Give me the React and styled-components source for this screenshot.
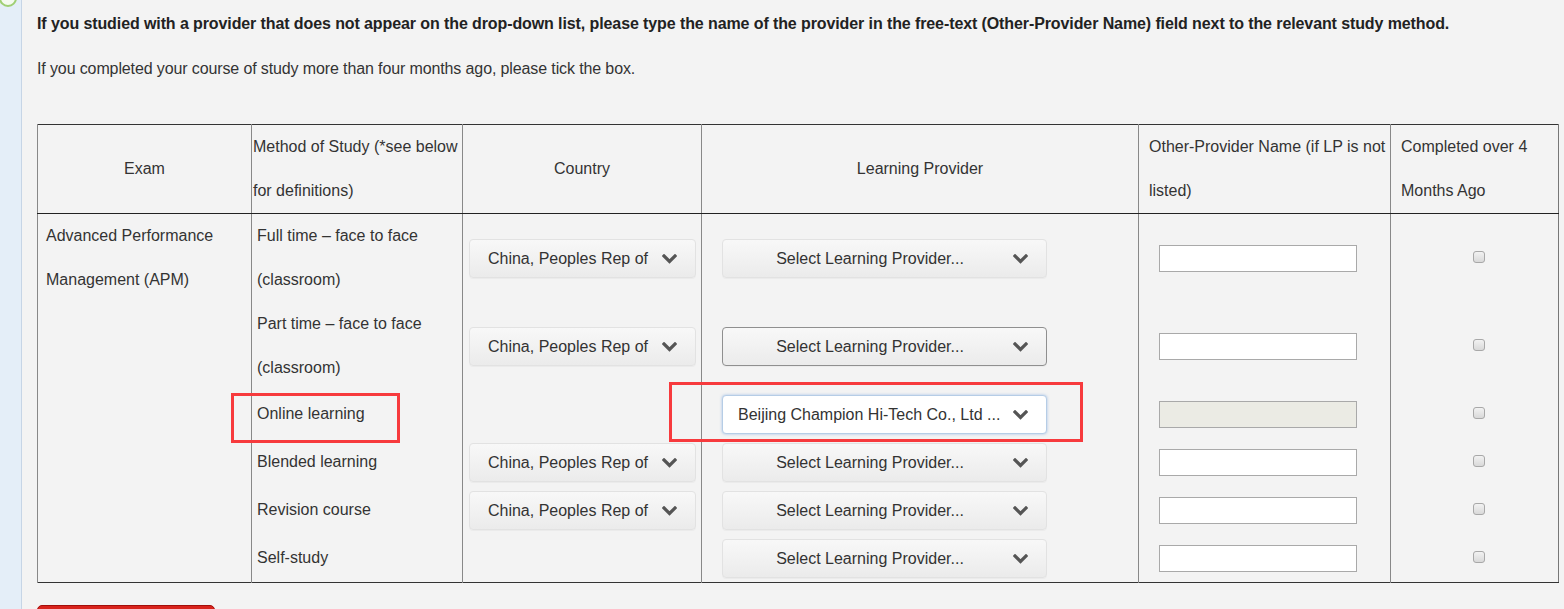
import React from "react";
import styled, { createGlobalStyle } from "styled-components";

const GlobalStyle = createGlobalStyle`
  html, body {
    margin: 0;
    padding: 0;
    background: #f3f3f3;
    font-family: "Liberation Sans", Arial, sans-serif;
    color: #333;
    overflow: hidden;
  }
`;

const Page = styled.div`
  position: relative;
  display: flex;
  height: 609px;
  overflow: hidden;
`;

const Sidebar = styled.div`
  position: relative;
  width: 21px;
  flex: none;
  background: #e4eef8;
  border-right: 1px solid #c6d5e6;
  overflow: hidden;
`;

const Radio = styled.span`
  position: absolute;
  left: -1px;
  top: -11px;
  width: 14px;
  height: 14px;
  border: 2px solid #9fcf74;
  border-radius: 50%;
  background: #f4faf0;
`;

const Content = styled.div`
  flex: 1;
  padding: 14px 0 0 15px;
`;

const Lead = styled.p`
  margin: 0;
  font-size: 16px;
  line-height: 20px;
  letter-spacing: ${(p) => (p.$bold ? "-0.1px" : "-0.12px")};
  font-weight: ${(p) => (p.$bold ? "bold" : "normal")};
  color: ${(p) => (p.$bold ? "#222" : "#333")};
  margin-bottom: ${(p) => p.$gap}px;
`;

const Table = styled.table`
  border-collapse: collapse;
  table-layout: fixed;
  width: 1521px;
  font-size: 16px;
  border-top: 1px solid #333;
  border-bottom: 1px solid #333;
  border-left: 1px solid #444;
  border-right: 1px solid #777;
`;

const Th = styled.th`
  font-weight: normal;
  height: 87px;
  line-height: 44px;
  padding: ${(p) => p.$pad || "0"};
  text-align: ${(p) => p.$align || "center"};
  vertical-align: middle;
  border-left: 1px solid #888;
  border-bottom: 1px solid #222;
  color: #333;
`;

const Td = styled.td`
  height: ${(p) => p.$h}px;
  padding: ${(p) => p.$pad || "0"};
  line-height: 44px;
  vertical-align: ${(p) => p.$valign || "middle"};
  text-align: ${(p) => p.$align || "left"};
  border-left: 1px solid #888;
  color: #333;
`;

const SelectBox = styled.div`
  display: flex;
  align-items: center;
  box-sizing: border-box;
  width: ${(p) => p.$w}px;
  height: 39px;
  margin-top: 1px;
  padding: 0 18px 0 ${(p) => (p.$active ? 15 : 12)}px;
  gap: 8px;
  border-radius: 4px;
  font-size: 16px;
  line-height: 20px;
  color: #333;
  background: ${(p) =>
    p.$active ? "#fff" : "linear-gradient(#f8f8f8, #ebebeb)"};
  border: 1px solid
    ${(p) => (p.$active ? "#b6cde6" : p.$hover ? "#8f8f8f" : "#e2e2e2")};
  box-shadow: ${(p) =>
    p.$active ? "0 0 3px rgba(102, 153, 220, 0.55)" : "0 1px 0 rgba(0,0,0,0.03)"};
`;

const SelectText = styled.span`
  flex: 1;
  text-align: ${(p) => (p.$left ? "left" : "center")};
  white-space: nowrap;
  overflow: hidden;
`;

const Chevron = () => (
  <svg width="15" height="10" viewBox="0 0 15 10" style={{ flex: "none" }}>
    <polyline
      points="2,2 7.5,7.5 13,2"
      fill="none"
      stroke="#555"
      strokeWidth="3.2"
      strokeLinecap="square"
    />
  </svg>
);

const Select = ({ w, text, active, hover }) => (
  <SelectBox $w={w} $active={active} $hover={hover}>
    <SelectText $left={active}>{text}</SelectText>
    <Chevron />
  </SelectBox>
);

const TextInput = styled.input`
  display: block;
  box-sizing: border-box;
  width: 198px;
  height: 27px;
  margin: 0;
  border: 1px solid #a9a9a9;
  background: ${(p) => (p.disabled ? "#ebebe4" : "#fff")};
  font: inherit;
`;

const Check = styled.span`
  display: inline-block;
  vertical-align: middle;
  box-sizing: border-box;
  width: 12px;
  height: 12px;
  margin-top: -3px;
  border: 1px solid #a8a8a8;
  border-radius: 3px;
  background: linear-gradient(#f2f2f2, #d9d9d9);
`;

const Submit = styled.div`
  margin-top: 22px;
  width: 178px;
  height: 36px;
  box-sizing: border-box;
  background: #d8231c;
  border: 1px solid #a30e0a;
  border-radius: 5px;
`;

const Mark = styled.div`
  position: absolute;
  box-sizing: border-box;
  left: ${(p) => p.$x}px;
  top: ${(p) => p.$y}px;
  width: ${(p) => p.$w}px;
  height: ${(p) => p.$h}px;
  border: 3px solid #f73a3d;
`;

const rows = [
  { method: ["Full time – face to face", "(classroom)"], h: 88, country: true, lp: "Select Learning Provider..." },
  { method: ["Part time – face to face", "(classroom)"], h: 88, country: true, lp: "Select Learning Provider...", hover: true },
  { method: ["Online learning"], h: 48, country: false, lp: "Beijing Champion Hi-Tech Co., Ltd ...", active: true },
  { method: ["Blended learning"], h: 48, country: true, lp: "Select Learning Provider..." },
  { method: ["Revision course"], h: 48, country: true, lp: "Select Learning Provider..." },
  { method: ["Self-study"], h: 48, country: false, lp: "Select Learning Provider..." },
];

export default function App() {
  return (
    <Page>
      <GlobalStyle />
      <Sidebar>
        <Radio />
      </Sidebar>
      <Content>
        <Lead $bold $gap={25}>
          If you studied with a provider that does not appear on the drop-down list, please type the name of the provider in the free-text (Other-Provider Name) field next to the relevant study method.
        </Lead>
        <Lead $gap={45}>
          If you completed your course of study more than four months ago, please tick the box.
        </Lead>
        <Table>
          <colgroup>
            <col style={{ width: 214 }} />
            <col style={{ width: 211 }} />
            <col style={{ width: 239 }} />
            <col style={{ width: 437 }} />
            <col style={{ width: 252 }} />
            <col style={{ width: 168 }} />
          </colgroup>
          <thead>
            <tr>
              <Th>Exam</Th>
              <Th $align="left" $pad="0 0 0 1px">Method of Study (*see below for definitions)</Th>
              <Th>Country</Th>
              <Th>Learning Provider</Th>
              <Th $align="left" $pad="0 4px 0 10px">Other-Provider Name (if LP is not listed)</Th>
              <Th $align="left" $pad="0 20px 0 10px">Completed over 4 Months Ago</Th>
            </tr>
          </thead>
          <tbody>
            {rows.map((r, i) => (
              <tr key={i}>
                {i === 0 && (
                  <Td rowSpan={6} $valign="top" $pad="0 0 0 8px">
                    Advanced Performance Management (APM)
                  </Td>
                )}
                <Td $h={r.h} $pad="0 0 0 5px">
                  {r.method.map((m) => (
                    <div key={m}>{m}</div>
                  ))}
                </Td>
                <Td $h={r.h} $pad="0 0 0 6px">
                  {r.country && <Select w={227} text="China, Peoples Rep of" />}
                </Td>
                <Td $h={r.h} $pad="0 0 0 20px">
                  <Select w={325} text={r.lp} active={r.active} hover={r.hover} />
                </Td>
                <Td $h={r.h} $pad="0 0 0 20px">
                  <TextInput type="text" disabled={r.active} />
                </Td>
                <Td $h={r.h} $align="center" $pad="0 0 0 9px">
                  <Check />
                </Td>
              </tr>
            ))}
          </tbody>
        </Table>
        <Submit />
      </Content>
      <Mark $x={231} $y={393} $w={169} $h={50} />
      <Mark $x={669} $y={382} $w={414} $h={60} />
    </Page>
  );
}
